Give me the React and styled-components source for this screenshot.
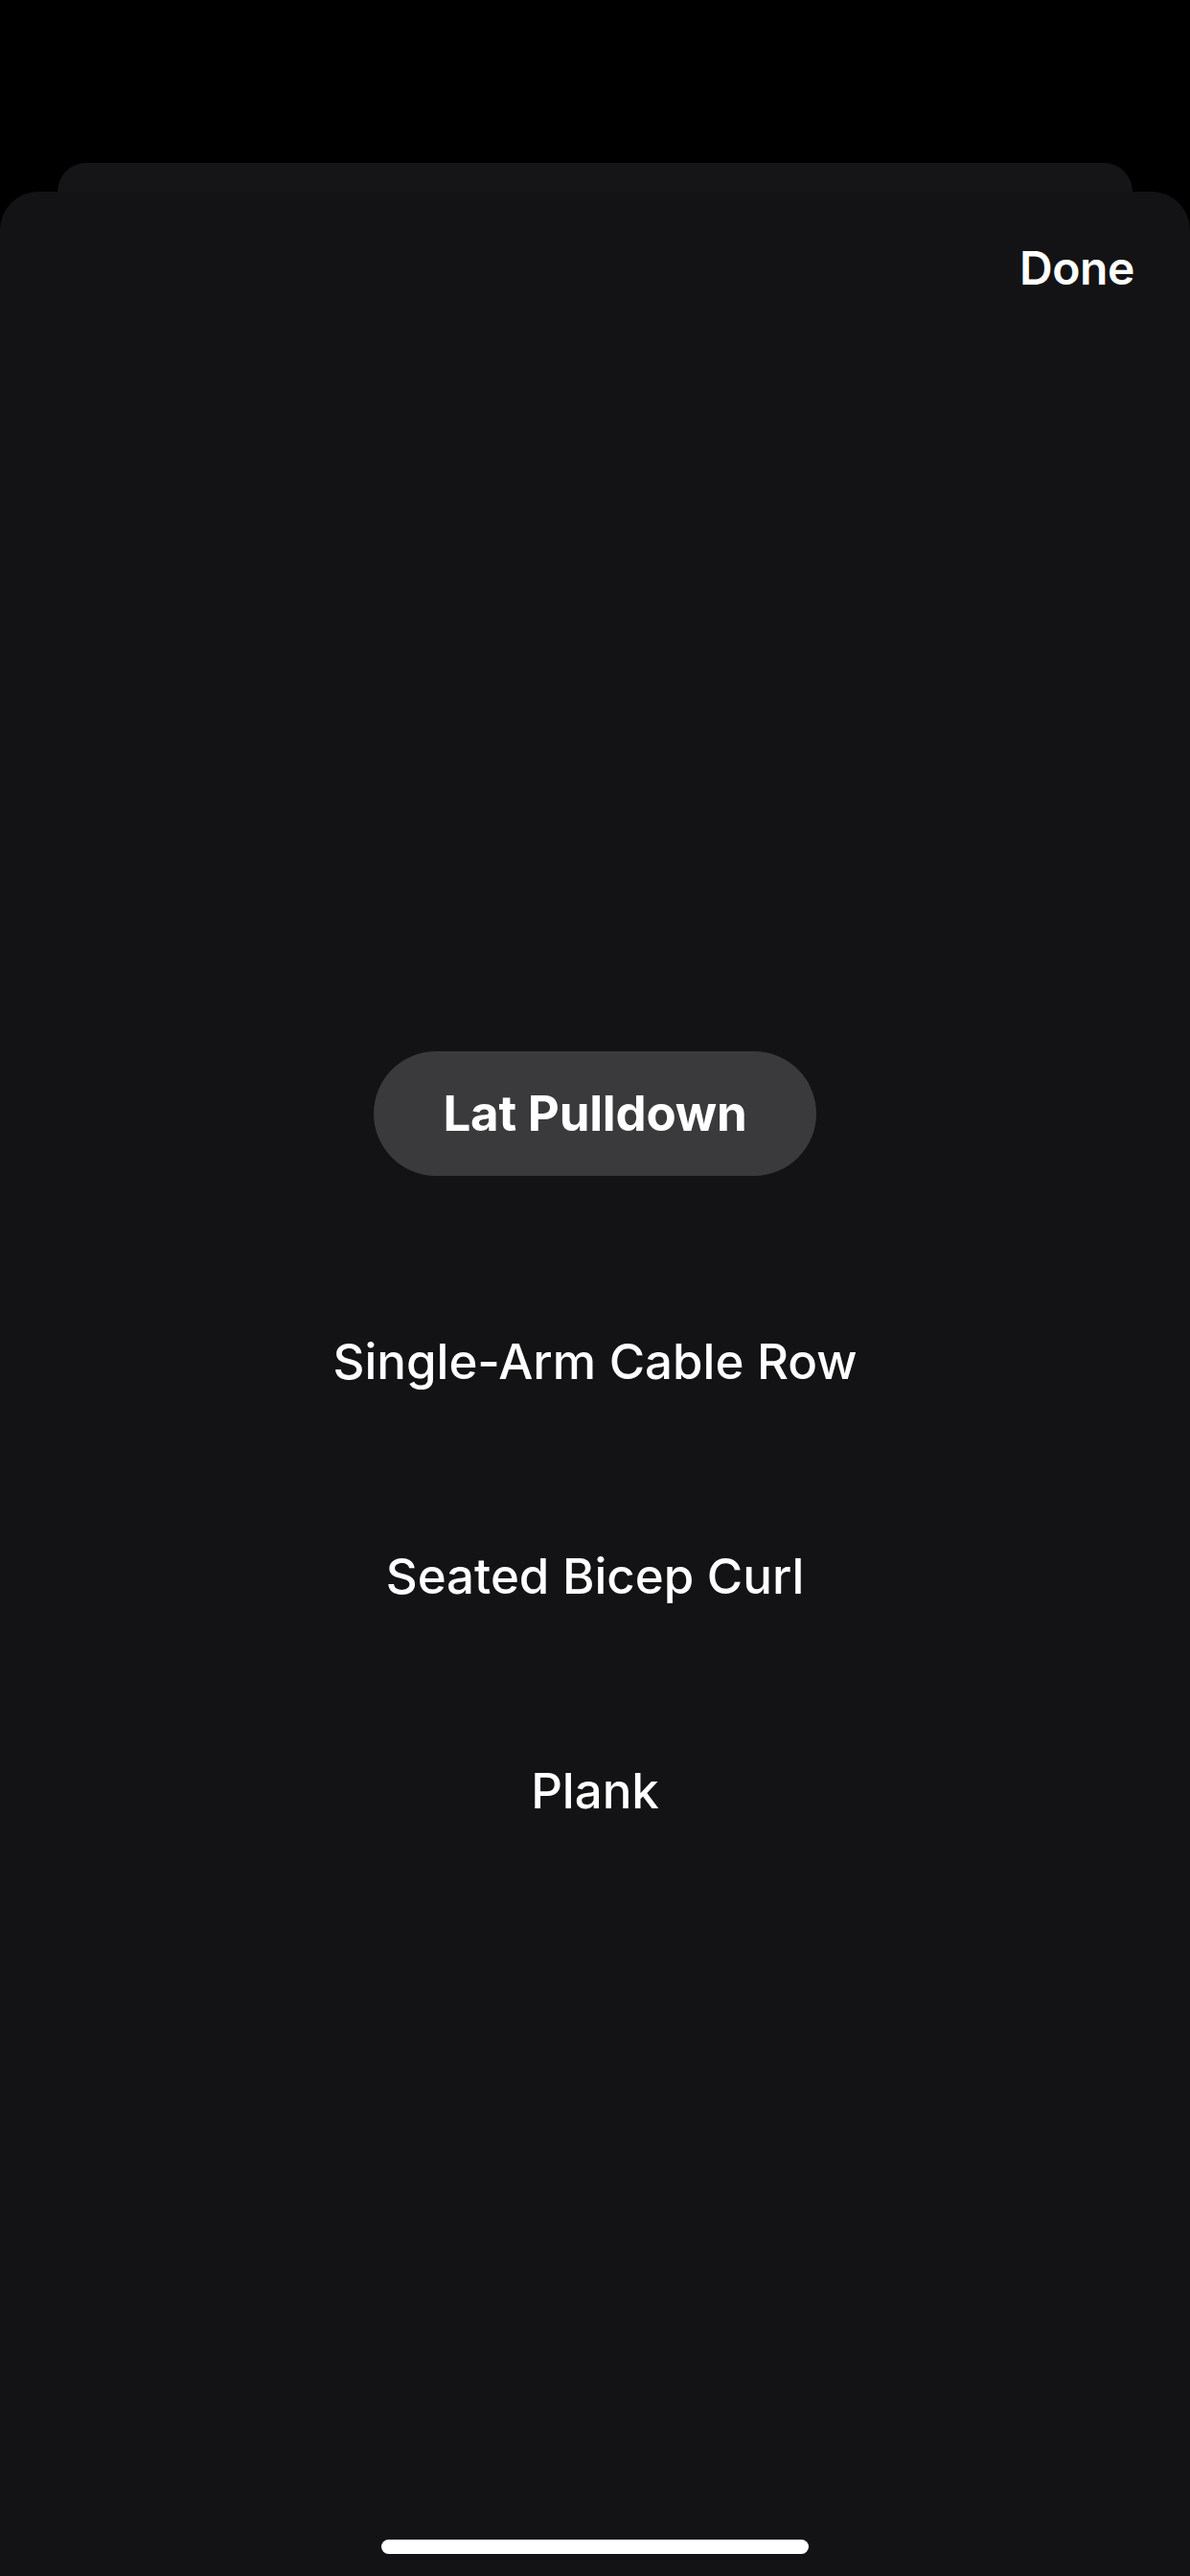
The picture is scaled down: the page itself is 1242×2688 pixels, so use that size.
import React from "react";
import styled, { createGlobalStyle } from "styled-components";

const GlobalStyle = createGlobalStyle`
  html, body {
    margin: 0;
    padding: 0;
    background: #000;
  }
  body {
    font-family: Inter, "Noto Sans", "Liberation Sans", sans-serif;
    -webkit-font-smoothing: antialiased;
  }
`;

const exercises = ["Lat Pulldown", "Single-Arm Cable Row", "Seated Bicep Curl", "Plank"];

const App = () => {
  const selected = 0;

  return (
    <>
      <GlobalStyle />
      <Screen>
        <BackSheet />
        <Sheet>
          <Header>
            <DoneButton>Done</DoneButton>
          </Header>

          <List>
            {exercises.map((name, i) => (
              <Item key={name} $active={i === selected}>
                {name}
              </Item>
            ))}
          </List>

          <HomeIndicator />
        </Sheet>
      </Screen>
    </>
  );
};

const Screen = styled.div`
  display: flex;
  flex-direction: column;
  height: 2688px;
  padding-top: 170px;
  box-sizing: border-box;
  background: #000;
  overflow: hidden;
`;

const BackSheet = styled.div`
  height: 30px;
  margin: 0 60px;
  flex-shrink: 0;
  background: #151517;
  border-radius: 34px 34px 0 0;
`;

const Sheet = styled.div`
  flex: 1;
  display: flex;
  flex-direction: column;
  background: #131315;
  border-radius: 40px 40px 0 0;
`;

const Header = styled.div`
  display: flex;
  justify-content: flex-end;
  padding: 50px 58px 0;
`;

const DoneButton = styled.button`
  border: none;
  background: none;
  padding: 0;
  color: #fff;
  font-family: inherit;
  font-size: 48px;
  font-weight: 600;
  line-height: 60px;
  letter-spacing: -0.4px;
`;

const List = styled.div`
  flex: 1;
  display: flex;
  flex-direction: column;
  align-items: center;
  gap: 164px;
  padding-top: 787px;
`;

const Item = styled.div`
  display: flex;
  align-items: center;
  justify-content: center;
  color: #fff;
  font-size: 51px;
  font-weight: ${(p) => (p.$active ? 700 : 500)};
  line-height: 60px;
  letter-spacing: ${(p) => (p.$active ? "-0.2px" : "0")};
  height: ${(p) => (p.$active ? "130px" : "60px")};
  padding: ${(p) => (p.$active ? "0 72px" : "0")};
  border-radius: 65px;
  background: ${(p) => (p.$active ? "#3a3a3c" : "transparent")};
`;

const HomeIndicator = styled.div`
  align-self: center;
  width: 446px;
  height: 15px;
  margin-bottom: 23px;
  border-radius: 8px;
  background: #fff;
`;

export default App;
